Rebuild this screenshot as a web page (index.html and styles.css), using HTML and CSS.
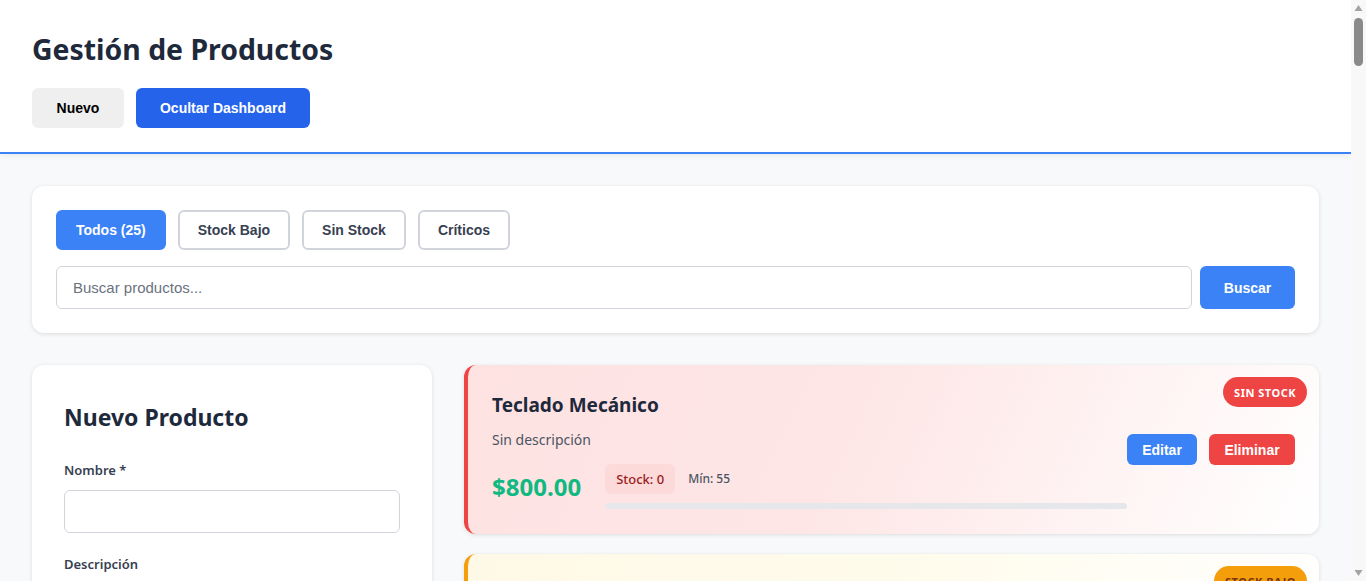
FILE: index.html
```html
<!DOCTYPE html>
<html lang="es">
<head>
<meta charset="utf-8">
<title>Gestión de Productos</title>
<link rel="stylesheet" href="styles.css">
</head>
<body>
<div class="page">
<header class="header">
  <h1 class="header-title">Gestión de Productos</h1>
  <div class="header-actions">
    <button class="btn btn-light">Nuevo</button>
    <button class="btn btn-primary-dark">Ocultar Dashboard</button>
  </div>
</header>

<main class="container">
  <section class="card filters">
    <div class="filter-row">
      <button class="chip chip-active">Todos (25)</button>
      <button class="chip">Stock Bajo</button>
      <button class="chip">Sin Stock</button>
      <button class="chip">Críticos</button>
    </div>
    <div class="search-row">
      <input class="search-input" type="text" placeholder="Buscar productos...">
      <button class="btn btn-search">Buscar</button>
    </div>
  </section>

  <div class="main-grid">
    <aside class="card form-card">
      <h2 class="form-title">Nuevo Producto</h2>
      <div class="field">
        <label class="field-label">Nombre *</label>
        <input class="field-input" type="text">
      </div>
      <div class="field">
        <label class="field-label">Descripción</label>
        <textarea class="field-input field-area"></textarea>
      </div>
      <div class="field">
        <label class="field-label">Precio *</label>
        <input class="field-input" type="text">
      </div>
      <div class="field">
        <label class="field-label">Stock *</label>
        <input class="field-input" type="text">
      </div>
    </aside>

    <div class="product-list">
      <article class="product product-out">
        <span class="badge badge-out">Sin Stock</span>
        <div class="product-info">
          <h3 class="product-name">Teclado Mecánico</h3>
          <p class="product-desc">Sin descripción</p>
          <div class="product-meta">
            <span class="price">$800.00</span>
            <div class="stock-block">
              <div class="stock-line">
                <span class="stock-tag stock-tag-out">Stock: 0</span>
                <span class="stock-min">Mín: 55</span>
              </div>
              <div class="bar"><div class="bar-fill" style="width:0%"></div></div>
            </div>
          </div>
        </div>
        <div class="product-actions">
          <button class="btn btn-edit">Editar</button>
          <button class="btn btn-delete">Eliminar</button>
        </div>
      </article>

      <article class="product product-low">
        <span class="badge badge-low">Stock Bajo</span>
        <div class="product-info">
          <h3 class="product-name">Mouse Inalámbrico</h3>
          <p class="product-desc">Sin descripción</p>
          <div class="product-meta">
            <span class="price">$350.00</span>
            <div class="stock-block">
              <div class="stock-line">
                <span class="stock-tag stock-tag-low">Stock: 12</span>
                <span class="stock-min">Mín: 20</span>
              </div>
              <div class="bar"><div class="bar-fill bar-low" style="width:60%"></div></div>
            </div>
          </div>
        </div>
        <div class="product-actions">
          <button class="btn btn-edit">Editar</button>
          <button class="btn btn-delete">Eliminar</button>
        </div>
      </article>
    </div>
  </div>
</main>
</div>

<div class="scrollbar" aria-hidden="true">
  <svg class="scroll-arrow" width="15" height="17" viewBox="0 0 15 17"><path d="M3.5 11 L7.5 5 L11.5 11 Z" fill="#a3a3a3"/></svg>
  <div class="scroll-track"><div class="scroll-thumb"></div></div>
  <svg class="scroll-arrow" width="15" height="17" viewBox="0 0 15 17"><path d="M3.5 6 L11.5 6 L7.5 12 Z" fill="#a3a3a3"/></svg>
</div>
</body>
</html>
```

FILE: styles.css
```css
* { box-sizing: border-box; }

html, body {
  margin: 0;
  padding: 0;
}

body {
  background: #f8f9fb;
  font-family: "Noto Sans", "Open Sans", sans-serif;
  color: #1f2937;
}

.page {
  margin-right: 15px;
}

/* emulated browser scrollbar */
.scrollbar {
  position: fixed;
  top: 0;
  right: 0;
  width: 15px;
  height: 100vh;
  background: #f8f8f8;
  display: flex;
  flex-direction: column;
}

.scroll-arrow {
  display: block;
  flex: none;
}

.scroll-track {
  flex: 1;
  padding: 1px 3px;
}

.scroll-thumb {
  height: 48px;
  border-radius: 5px;
  background: #8a8a8a;
}

.header {
  background: #ffffff;
  padding: 30px 32px 24px;
  border-bottom: 2px solid #3b82f6;
  box-shadow: 0 2px 6px rgba(0, 0, 0, 0.06);
}

.header-title {
  margin: 0 0 20px;
  font-size: 28.4px;
  line-height: 38px;
  font-weight: 700;
  color: #1e293b;
}

.header-actions {
  display: flex;
  gap: 12px;
}

.btn {
  font-family: "Liberation Sans", Arial, sans-serif;
  font-weight: 700;
  border: none;
  cursor: pointer;
}

.btn-light {
  height: 40px;
  width: 92px;
  background: #efefef;
  color: #000;
  border-radius: 6px;
  font-size: 14px;
}

.btn-primary-dark {
  height: 40px;
  width: 174px;
  background: #2563eb;
  color: #fff;
  border-radius: 6px;
  font-size: 14px;
}

.container {
  padding: 32px 32px 40px;
}

.card {
  background: #fff;
  border-radius: 12px;
  box-shadow: 0 1px 4px rgba(0, 0, 0, 0.12);
}

.filters {
  padding: 24px;
}

.filter-row {
  display: flex;
  gap: 12px;
  margin-bottom: 16px;
}

.chip {
  height: 40px;
  padding: 0 18px;
  background: #fff;
  border: 2px solid #d1d5db;
  border-radius: 6px;
  font-family: "Liberation Sans", Arial, sans-serif;
  font-weight: 700;
  font-size: 14px;
  color: #374151;
}

.chip-active {
  background: #3b82f6;
  border-color: #3b82f6;
  color: #fff;
}

.search-row {
  display: flex;
  gap: 8px;
}

.search-input {
  flex: 1;
  height: 43px;
  border: 1px solid #d1d5db;
  border-radius: 6px;
  padding: 0 16px;
  font-family: "Liberation Sans", Arial, sans-serif;
  font-size: 15px;
  color: #374151;
}

.search-input::placeholder {
  color: #6b7280;
}

.btn-search {
  width: 95px;
  height: 43px;
  background: #3b82f6;
  color: #fff;
  border-radius: 6px;
  font-size: 14px;
}

.main-grid {
  display: grid;
  grid-template-columns: 400px 1fr;
  gap: 32px;
  margin-top: 32px;
  align-items: start;
}

.form-card {
  padding: 32px;
}

.form-title {
  margin: 4px 0 28px;
  font-size: 23px;
  line-height: 32px;
  font-weight: 700;
  color: #1e293b;
}

.field {
  margin-bottom: 22px;
}

.field-label {
  display: block;
  font-size: 13px;
  font-weight: 600;
  color: #374151;
  margin-bottom: 11px;
}

.field-input {
  display: block;
  width: 100%;
  height: 43px;
  border: 1px solid #d1d5db;
  border-radius: 6px;
  padding: 0 12px;
  font-family: inherit;
  font-size: 14px;
}

.field-area {
  height: 80px;
  resize: none;
}

.product-list {
  display: flex;
  flex-direction: column;
  gap: 20px;
}

.product {
  position: relative;
  display: flex;
  align-items: center;
  padding: 24px;
  border-left: 4px solid #ef4444;
  border-radius: 12px;
  box-shadow: 0 1px 4px rgba(0, 0, 0, 0.12);
  min-height: 169px;
}

.product-out {
  border-left-color: #ef4444;
  background: linear-gradient(115deg, #fee2e2 0%, #fee6e6 45%, #ffffff 100%);
}

.product-low {
  border-left-color: #f59e0b;
  background: linear-gradient(115deg, #fef9e7 0%, #fffbeb 45%, #ffffff 100%);
}

.badge {
  position: absolute;
  top: 12px;
  right: 12px;
  height: 30px;
  padding: 0 11px;
  display: flex;
  align-items: center;
  border-radius: 15px;
  font-size: 11px;
  font-weight: 700;
  text-transform: uppercase;
  letter-spacing: 0.5px;
}

.badge-out {
  background: #ef4444;
  color: #fff;
}

.badge-low {
  background: #f59e0b;
  color: #78350f;
}

.product-info {
  flex: 1;
}

.product-name {
  margin: 0 0 10px;
  font-size: 19px;
  line-height: 28px;
  font-weight: 700;
  color: #1e293b;
}

.product-desc {
  margin: 0 0 13px;
  font-size: 14px;
  line-height: 22px;
  color: #4b5563;
}

.product-meta {
  display: flex;
  align-items: flex-start;
  gap: 24px;
}

.price {
  font-size: 24px;
  font-weight: 700;
  color: #10b981;
  margin-top: 6px;
}

.stock-block {
  flex: 1;
}

.stock-line {
  display: flex;
  align-items: center;
  gap: 13px;
  margin-bottom: 9px;
}

.stock-tag {
  height: 30px;
  padding: 0 11px;
  display: flex;
  align-items: center;
  border-radius: 6px;
  font-size: 13px;
  font-weight: 500;
}

.stock-tag-out {
  background: #fddada;
  color: #991b1b;
}

.stock-tag-low {
  background: #fef3c7;
  color: #92400e;
}

.stock-min {
  font-size: 12px;
  font-weight: 500;
  color: #4b5563;
}

.bar {
  height: 6px;
  border-radius: 3px;
  background: #e5e7eb;
  overflow: hidden;
}

.bar-fill {
  height: 100%;
  background: #ef4444;
}

.bar-low {
  background: #f59e0b;
}

.product-actions {
  display: flex;
  gap: 12px;
}

.btn-edit {
  height: 31px;
  width: 70px;
  background: #3b82f6;
  color: #fff;
  border-radius: 6px;
  font-size: 14px;
}

.btn-delete {
  height: 31px;
  width: 86px;
  background: #ef4444;
  color: #fff;
  border-radius: 6px;
  font-size: 14px;
}
```
